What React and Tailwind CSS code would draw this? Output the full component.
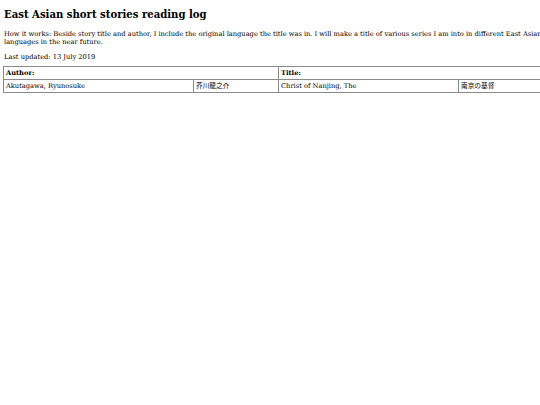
export default function App() {
  return (
    <div className="w-[540px] h-[405px] overflow-hidden bg-white text-black" style={{ fontFamily: '"DejaVu Serif", "Noto Sans CJK JP", serif' }}>
      <div className="w-[600px] pl-[4px] pt-[8px]">
        <h1 className="text-[10.1px] font-bold leading-[13px]">East Asian short stories reading log</h1>
        <p className="mt-[9px] text-[6.68px] leading-[8px] w-[550px]">
          How it works: Beside story title and author, I include the original language the title was in. I will make a title of various series I am into in different East Asian languages in the near future.
        </p>
        <p className="mt-[7px] text-[6.68px] leading-[8px]">Last updated: 13 July 2019</p>
        <table className="mt-[5px] -ml-[1px] border-collapse text-[6.68px] leading-[8px] w-[550px] table-fixed">
          <colgroup>
            <col className="w-[190px]" />
            <col className="w-[85px]" />
            <col className="w-[180px]" />
            <col className="w-[95px]" />
          </colgroup>
          <tbody>
            <tr>
              <th colSpan={2} className="border border-[#8a8a8a] text-left font-bold px-[2px] h-[13px] p-0 align-middle">Author:</th>
              <th colSpan={2} className="border border-[#8a8a8a] text-left font-bold px-[2px] h-[13px] p-0 align-middle">Title:</th>
            </tr>
            <tr>
              <td className="border border-[#8a8a8a] px-[2px] h-[13px] align-middle">Akutagawa, Ryunosuke</td>
              <td className="border border-[#8a8a8a] px-[2px] h-[13px] align-middle">芥川龍之介</td>
              <td className="border border-[#8a8a8a] px-[2px] h-[13px] align-middle">Christ of Nanjing, The</td>
              <td className="border border-[#8a8a8a] px-[2px] h-[13px] align-middle">南京の基督</td>
            </tr>
          </tbody>
        </table>
      </div>
    </div>
  );
}
